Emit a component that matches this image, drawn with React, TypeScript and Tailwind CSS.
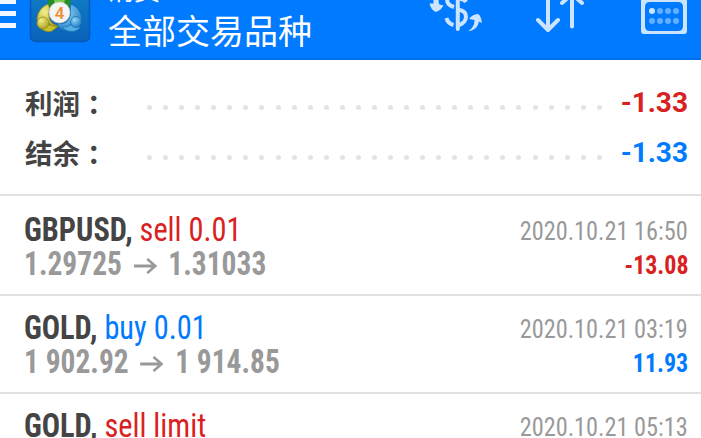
import type { ReactNode } from "react";

type Tone = "red" | "blue";

const toneClass: Record<Tone, string> = {
  red: "text-[#d92121]",
  blue: "text-[#007aff]",
};

interface Deal {
  symbol: string;
  action: string;
  tone: Tone;
  time: string;
  open?: string;
  close?: string;
  profit?: string;
  profitTone?: Tone;
}

const deals: Deal[] = [
  {
    symbol: "GBPUSD",
    action: "sell 0.01",
    tone: "red",
    time: "2020.10.21 16:50",
    open: "1.29725",
    close: "1.31033",
    profit: "-13.08",
    profitTone: "red",
  },
  {
    symbol: "GOLD",
    action: "buy 0.01",
    tone: "blue",
    time: "2020.10.21 03:19",
    open: "1 902.92",
    close: "1 914.85",
    profit: "11.93",
    profitTone: "blue",
  },
  {
    symbol: "GOLD",
    action: "sell limit",
    tone: "red",
    time: "2020.10.21 05:13",
  },
];

function Logo() {
  return (
    <svg className="ml-[13px] h-[44px] w-[62px] shrink-0" viewBox="0 0 62 44">
      <defs>
        <linearGradient id="tile" x1="0" y1="0" x2="0" y2="1">
          <stop offset="0" stopColor="#1183c9" />
          <stop offset="1" stopColor="#0a62b8" />
        </linearGradient>
        <radialGradient id="gold" cx="0.35" cy="0.3" r="0.8">
          <stop offset="0" stopColor="#f3ee8a" />
          <stop offset="1" stopColor="#a49a12" />
        </radialGradient>
        <radialGradient id="sky" cx="0.35" cy="0.3" r="0.8">
          <stop offset="0" stopColor="#8ed4f6" />
          <stop offset="1" stopColor="#1877c2" />
        </radialGradient>
      </defs>
      <rect x="1.500" y="-18" width="59" height="59.500" rx="5" fill="url(#tile)" stroke="#0659bd" strokeWidth="1.5" />
      <path d="M18 -4h25l-3 13H20z" fill="#258c2b" />
      <path d="M25 0h11l-2 7h-8z" fill="#78cb4b" />
      <path d="M19 4C12 7 8 13 8 20l8 2c5 1 8 4 8 8l6-4c-6-1-10-5-10-10-1-4 2-7-1-12z" fill="url(#gold)" stroke="#867f19" strokeWidth="0.8" />
      <path d="M9 25c3 5 9 8 14 6l6-5c-5 1-9-1-12-4z" fill="#c6c12d" stroke="#867f19" strokeWidth="0.7" />
      <circle cx="14" cy="23" r="6" fill="url(#gold)" stroke="#8d861a" strokeWidth="0.7" />
      <path d="M42 4c7 3 11 9 11 16l-7 2c-6 1-6 5-5 9-6 1-12-3-13-8 7 2 11-1 13-7 2-4-1-7 1-12z" fill="url(#sky)" stroke="#1668aa" strokeWidth="0.8" />
      <path d="M33 27c5 6 13 6 18 1l-5-8c-4 6-8 7-13 7z" fill="#4faee6" stroke="#1668aa" strokeWidth="0.7" />
      <circle cx="47" cy="22" r="5.500" fill="url(#sky)" stroke="#1769aa" strokeWidth="0.7" />
      <circle cx="30.500" cy="12.500" r="10.500" fill="#f4f4f2" stroke="#c9cdd0" strokeWidth="0.8" />
      <text x="30.500" y="18.500" textAnchor="middle" fontFamily="Roboto, sans-serif" fontSize="17" fontWeight="500" fill="#f08a30">
        4
      </text>
    </svg>
  );
}

function ToolbarIcons() {
  return (
    <svg className="ml-auto h-[36px] w-[275px] shrink-0" viewBox="0 0 275 36" fill="none" stroke="#cce4ff">
      {/* currency exchange */}
      <g strokeWidth="4">
        <path d="M31.800 -4v33" strokeLinecap="round" />
        <path d="M22 -3c-2 5 0 8 6 10" />
        <path d="M34 -1c3 0 5 1 6 3" />
        <path d="M32 9.500c6 1 8 4 8 7s-2 7.500-8 8.500" />
        <path d="M20.500 18c1 4 3 6 7 7" />
      </g>
      <path d="M7.500 -2v5.500H3.500c1 3.500 2 6 6 8.500 4-1 6-3 8-6.500l-4-1c-1-2-1-4-1-6.500z" fill="#cce4ff" stroke="none" />
      <path d="M42.500 31c4-3 6-6 6-11l-5.500-1c2-3 5-4.500 9-5 3 2 3.500 6 4 9l-3-1.500c-1 5-4 9-10.500 9.500z" fill="#cce4ff" stroke="none" />
      {/* sort arrows */}
      <path d="M122 -4v34M112 20l10 10 10-10M146 26.500V-6M136 3l10-9 10 9" strokeWidth="4" strokeLinecap="round" strokeLinejoin="round" />
      {/* calendar */}
      <path
        fillRule="evenodd"
        d="M215 -8h46v39q0 3-3 3h-40q-3 0-3-3zM224 2q-5 0-5 5v19q0 5 5 5h28q5 0 5-5V7q0-5-5-5z"
        fill="#cce4ff"
        stroke="none"
      />
      <path d="M219 -1h38" stroke="#7fbcff" strokeWidth="2" />
      <g stroke="none" fill="#66afff">
        <circle cx="226" cy="11" r="3" fill="#cce4ff" />
        <circle cx="234" cy="11" r="3" />
        <circle cx="242" cy="11" r="3" />
        <circle cx="250" cy="11" r="3" />
        <circle cx="226" cy="21" r="3" />
        <circle cx="234" cy="21" r="3" />
        <circle cx="242" cy="21" r="3" />
        <circle cx="250" cy="21" r="3" />
      </g>
    </svg>
  );
}

function Header() {
  return (
    <header className="flex h-[60px] shrink-0 items-start overflow-hidden border-b-2 border-[#0070eb] bg-[#007aff] text-white">
      <div className="flex w-4 shrink-0 flex-col gap-[7px]">
        <span className="h-1 bg-[#f0f7ff]" />
        <span className="h-[5px] bg-[#f0f7ff]" />
        <span className="h-[5px] bg-[#f0f7ff]" />
      </div>
      <Logo />
      <div className="-mt-[25px] ml-[17px] flex flex-col font-['Noto_Sans_CJK_SC',sans-serif] whitespace-nowrap">
        <span className="text-[26px] leading-[28px]">消费</span>
        <span className="mt-[7px] text-[34px] leading-[40px]">全部交易品种</span>
      </div>
      <ToolbarIcons />
    </header>
  );
}

function SummaryRow({ label, tone, children }: { label: string; tone: Tone; children: ReactNode }) {
  return (
    <div className="flex h-[50px] items-center pr-[13px] pl-[25px]">
      <span className="flex w-[122px] font-['Noto_Sans_CJK_SC',sans-serif] text-[27.500px] leading-[50px] font-bold text-[#444]">
        {label}
        <span className="pt-px font-['Noto_Sans_CJK_TC',sans-serif] leading-[50px]" lang="zh-TW">：</span>
      </span>
      <div className="mt-[11px] flex w-[455px] justify-between">
        {Array.from({ length: 29 }, (_, i) => (
          <span key={i} className="size-[5px] rounded-full bg-[#e4e4e4]" />
        ))}
      </div>
      <span className={`ml-auto pt-px text-[28px] leading-[50px] font-bold ${toneClass[tone]}`}>{children}</span>
    </div>
  );
}

function Arrow() {
  return (
    <svg className="mx-[13px] mt-1 h-4 w-[26px]" viewBox="0 0 26 16" fill="none" stroke="#999" strokeWidth="2.800">
      <path d="M0 8h24M15 1l9 7-9 7" />
    </svg>
  );
}

function DealRow({ deal }: { deal: Deal }) {
  return (
    <div className="h-[98px] shrink-0 border-b-2 border-[#e1e1e1] pt-[17px] pr-[13px] pl-6 font-stretch-condensed first:h-[100px] first:pt-[19px]">
      <div className="flex h-[30px] items-start justify-between">
        <p className="origin-left scale-x-[0.92] text-[33px] leading-[30px] whitespace-nowrap">
          <span className="font-bold text-[#444]">{deal.symbol},</span>{" "}
          <span className={toneClass[deal.tone]}>{deal.action}</span>
        </p>
        <span className="origin-right scale-x-[0.935] text-[26px] leading-[32px] text-[#999]">{deal.time}</span>
      </div>
      {deal.open && (
        <div className="mt-1 flex items-start justify-between font-bold">
          <p className="flex origin-left scale-x-[0.893] items-center text-[33px] leading-[30px] whitespace-nowrap text-[#999]">
            <span>{deal.open}</span>
            <Arrow />
            <span>{deal.close}</span>
          </p>
          <span
            className={`mt-px origin-right scale-x-[0.92] text-[26px] leading-[30px] ${toneClass[deal.profitTone ?? "red"]}`}
          >
            {deal.profit}
          </span>
        </div>
      )}
    </div>
  );
}

export default function App() {
  return (
    <div className="flex h-[438px] w-[701px] flex-col overflow-hidden bg-white font-['Roboto',sans-serif]">
      <Header />
      <section className="h-[136px] shrink-0 border-b-2 border-[#e1e1e1] pt-[17px]">
        <SummaryRow label="利润" tone="red">-1.33</SummaryRow>
        <SummaryRow label="结余" tone="blue">-1.33</SummaryRow>
      </section>
      <main>
        {deals.map((deal) => (
          <DealRow key={deal.time} deal={deal} />
        ))}
      </main>
    </div>
  );
}
